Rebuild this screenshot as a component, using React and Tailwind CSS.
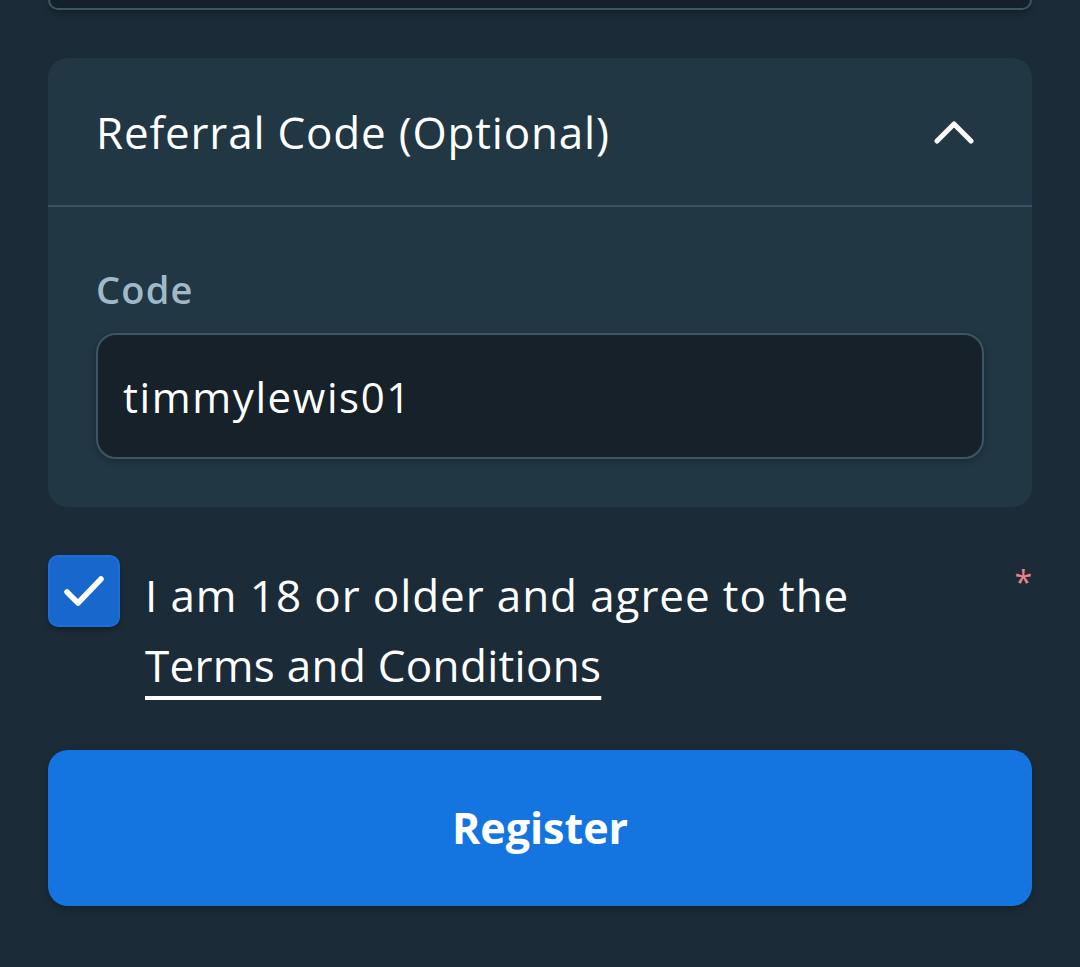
import React, { useState } from "react";

export default function App() {
  const [open, setOpen] = useState(true);
  const [code, setCode] = useState("timmylewis01");
  const [agreed, setAgreed] = useState(true);

  return (
    <div
      className="min-h-[967px] w-[1080px] bg-[#1b2c38] px-12 pb-12 overflow-hidden"
      style={{ fontFamily: "'Open Sans', 'Noto Sans', sans-serif" }}
    >
      {/* tail of the previous input, scrolled off the top */}
      <div className="h-[10px] rounded-b-[20px] border-x-2 border-b-2 border-[#3d5666] bg-[#14202a] shadow-[0_3px_6px_rgba(0,0,0,0.3)]" />

      <div className="mt-[48px] rounded-[20px] bg-[#213743]">
        <button
          type="button"
          onClick={() => setOpen(!open)}
          className="flex h-[147px] w-full items-center justify-between pl-[48px] pr-[58px] text-left"
        >
          <span className="text-[44px] tracking-[0.8px] text-white">Referral Code (Optional)</span>
          <svg width="40" height="24" viewBox="0 0 40 24" fill="none">
            <path
              d={open ? "M3 21 L20 4 L37 21" : "M3 4 L20 21 L37 4"}
              stroke="white"
              strokeWidth="5"
              strokeLinecap="round"
              strokeLinejoin="round"
            />
          </svg>
        </button>
        {open && (
          <>
            <div className="h-[2px] bg-[#3a5364]" />
            <div className="px-[48px] pt-[62px] pb-[48px]">
              <label className="block text-[38px] font-semibold leading-[40px] tracking-[1.2px] text-[#9fb9c9]">Code</label>
              <input
                value={code}
                onChange={(e) => setCode(e.target.value)}
                className="mt-[24px] block h-[126px] w-full rounded-[20px] border-2 border-[#3d5666] bg-[#162129] px-[25px] text-[42px] tracking-[1.6px] text-white outline-none shadow-[0_2px_6px_rgba(0,0,0,0.25)]"
              />
            </div>
          </>
        )}
      </div>

      <div className="mt-[48px] flex items-start">
        <button
          type="button"
          onClick={() => setAgreed(!agreed)}
          className="flex h-[72px] w-[72px] shrink-0 items-center justify-center rounded-[10px] border-2 border-[#1b6fd6] bg-[#1767cc] shadow-[0_3px_5px_rgba(0,0,0,0.3)]"
        >
          {agreed && (
            <svg width="42" height="34" viewBox="0 0 42 34" fill="none">
              <path d="M4 18 L15 29 L38 5" stroke="white" strokeWidth="5.5" strokeLinecap="round" strokeLinejoin="round" />
            </svg>
          )}
        </button>
        <p className="ml-[25px] mt-[5px] flex-1 text-[44px] leading-[70px] tracking-[0.9px] text-white">
          I am 18 or older and agree to the{" "}
          <a href="#" className="whitespace-nowrap tracking-[0.3px] underline decoration-[4px] underline-offset-[14px]">
            Terms and Conditions
          </a>
        </p>
        <span className="mt-[12px] text-[32px] leading-[30px] text-[#f0808c]">*</span>
      </div>

      <button
        type="button"
        className="mt-[50px] flex h-[156px] w-full items-center justify-center rounded-[20px] bg-[#1475e1] text-[43px] font-bold text-white shadow-[0_4px_8px_rgba(0,0,0,0.25)]"
      >
        Register
      </button>
    </div>
  );
}
